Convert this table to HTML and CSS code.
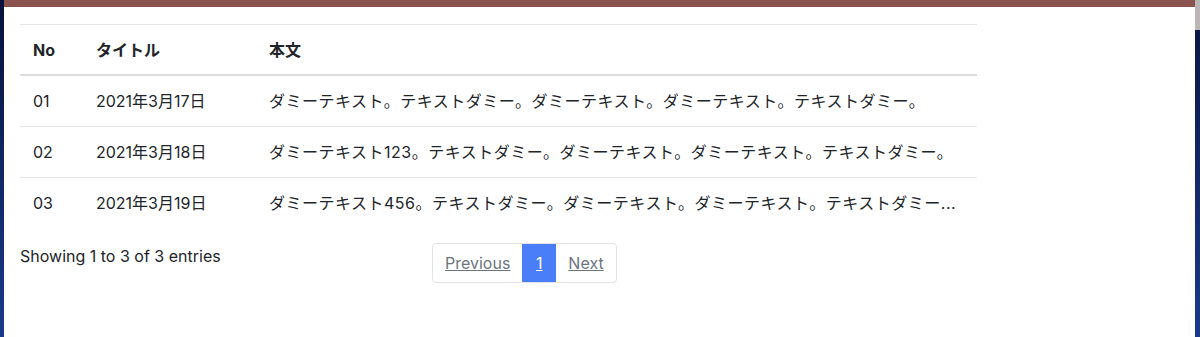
FILE: index.html
```html
<!DOCTYPE html>
<html lang="ja">
<head>
<meta charset="utf-8">
<link rel="stylesheet" href="styles.css">
</head>
<body>
<div class="frame">
  <div class="edge-left"></div>
  <div class="window">
    <div class="topbar"></div>
    <div class="content">
      <table class="data">
        <thead>
          <tr><th class="c-no">No</th><th class="c-title">タイトル</th><th class="c-body">本文</th></tr>
        </thead>
        <tbody>
          <tr><td>01</td><td>2021年3月17日</td><td class="body-text">ダミーテキスト。テキストダミー。ダミーテキスト。ダミーテキスト。テキストダミー。</td></tr>
          <tr><td>02</td><td>2021年3月18日</td><td class="body-text">ダミーテキスト123。テキストダミー。ダミーテキスト。ダミーテキスト。テキストダミー。</td></tr>
          <tr><td>03</td><td>2021年3月19日</td><td class="body-text">ダミーテキスト456。テキストダミー。ダミーテキスト。ダミーテキスト。テキストダミー...</td></tr>
        </tbody>
      </table>
      <div class="footer-row">
        <div class="info">Showing 1 to 3 of 3 entries</div>
        <div class="paginate">
          <ul class="pagination">
            <li class="page"><a href="#">Previous</a></li>
            <li class="page active"><a href="#">1</a></li>
            <li class="page"><a href="#">Next</a></li>
          </ul>
        </div>
      </div>
    </div>
  </div>
  <div class="edge-right"><div class="edge-right-top"></div></div>
</div>
</body>
</html>
```
FILE: styles.css
```css
html, body {
  margin: 0;
  padding: 0;
  background: #ffffff;
}
body {
  font-family: Inter, "Liberation Sans", "Noto Sans CJK JP", sans-serif;
  font-size: 16px;
  line-height: 24px;
  color: #212529;
}
.frame {
  display: flex;
  height: 337px;
  overflow: hidden;
}
.edge-left {
  width: 4px;
  background: linear-gradient(#07123a, #1a3a8c);
}
.edge-right {
  width: 5px;
  background: linear-gradient(#0a1440, #1a3a8a);
}
.edge-right-top {
  height: 30px;
  background: #b9b7b6;
}
.window {
  flex: 1;
  background: #ffffff;
}
.topbar {
  height: 7px;
  background: #8a5350;
}
.content {
  padding: 17px 0 0 16px;
  width: 957px;
}
.data {
  width: 957px;
  border-collapse: collapse;
  table-layout: fixed;
  border-top: 1px solid #e4e5e8;
}
.data th,
.data td {
  box-sizing: border-box;
}
.c-no { width: 63px; }
.c-title { width: 173px; }
.data th {
  text-align: left;
  font-weight: 700;
  padding: 13px 13px 12px;
  border-bottom: 2px solid #dcdde1;
}
.data td {
  padding: 13px 13px;
  border-bottom: 1px solid #e4e5e8;
  white-space: nowrap;
  overflow: hidden;
}
.data td.body-text {
  letter-spacing: 0.5px;
}
.data tbody tr:last-child td {
  border-bottom: none;
}
.footer-row {
  display: grid;
  grid-template-columns: 408px 1fr;
  margin-top: 15px;
}
.info {
  padding-top: 1px;
}
.paginate {
  padding-left: 4px;
}
.pagination {
  display: inline-flex;
  list-style: none;
  margin: 0;
  padding: 0;
  border: 1px solid #e2e3e6;
  border-radius: 4px;
  overflow: hidden;
}
.page a {
  display: block;
  padding: 7px 12px;
  color: #6c757d;
  text-decoration: underline;
}
.page.active a {
  background: #4a7ef8;
  color: #ffffff;
  min-width: 34px;
  box-sizing: border-box;
  text-align: center;
}
```
